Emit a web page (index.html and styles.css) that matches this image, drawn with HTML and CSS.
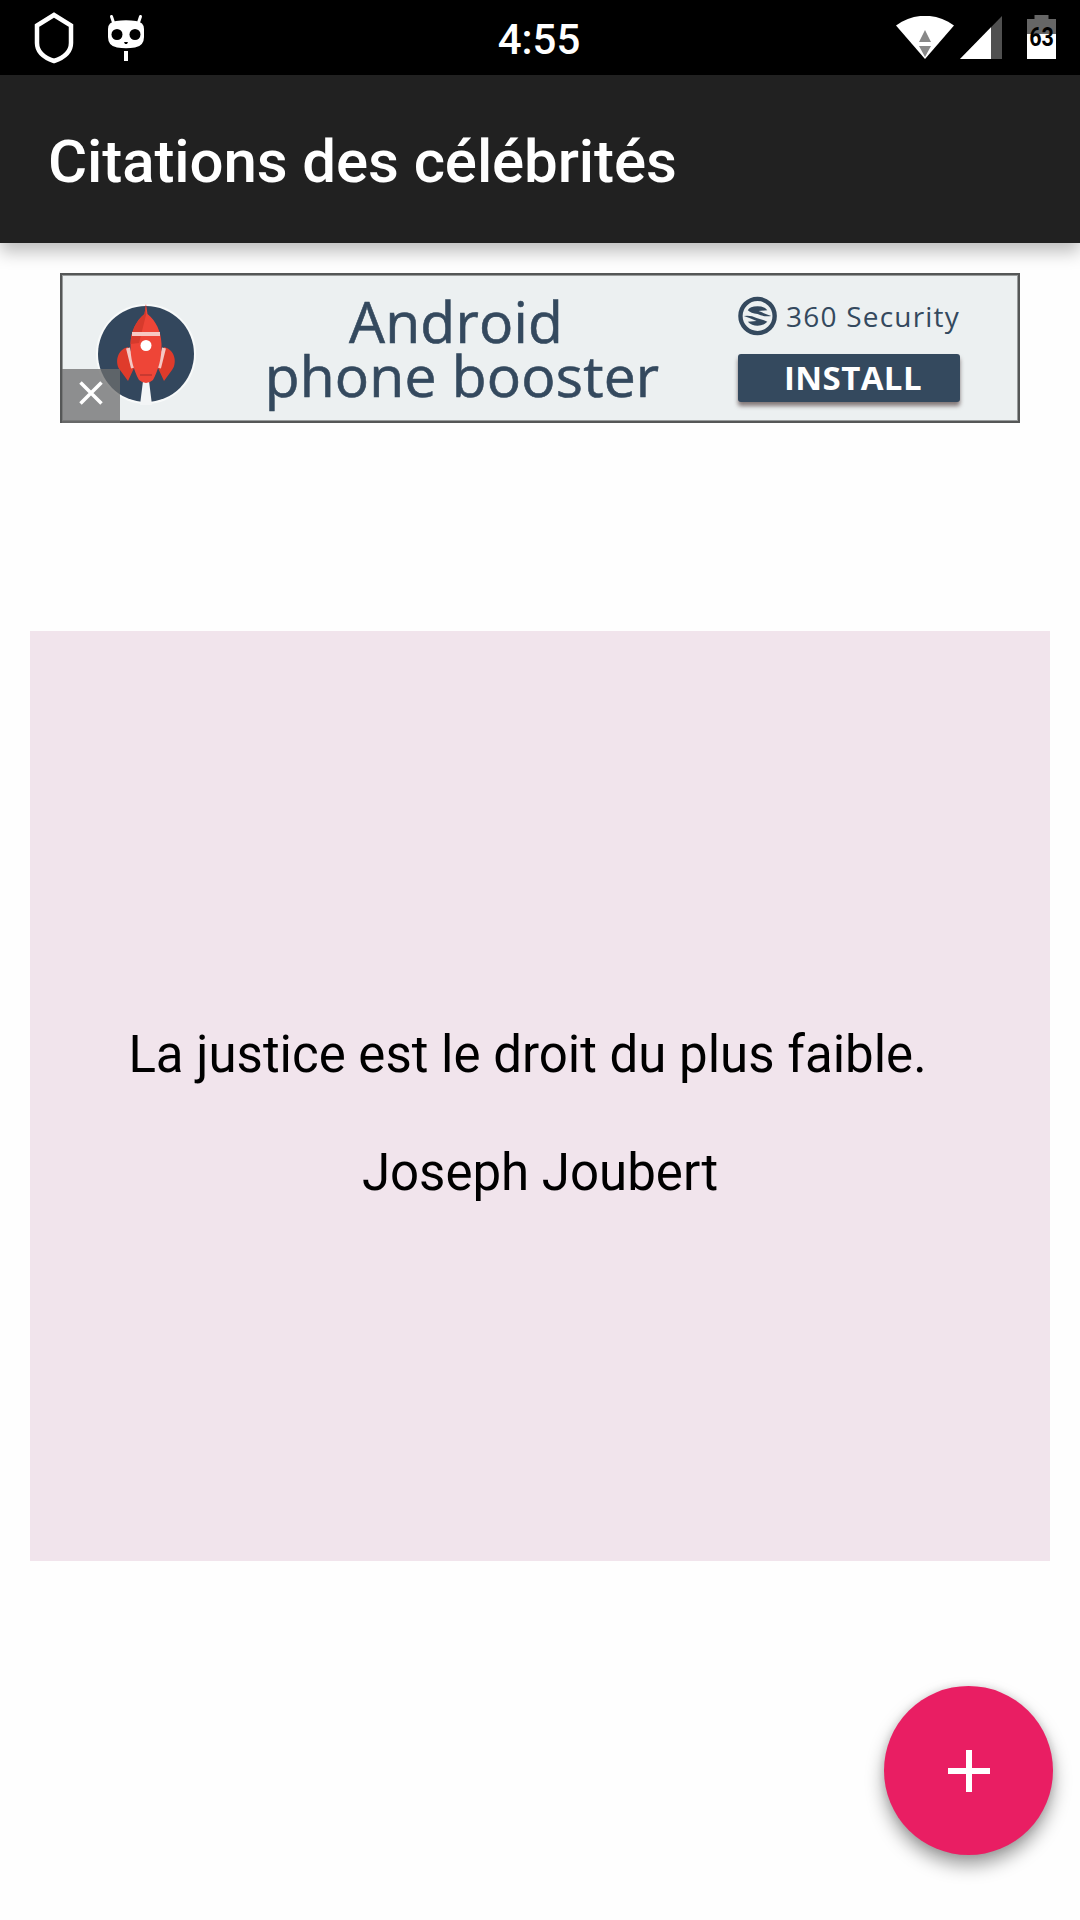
FILE: index.html
```html
<!DOCTYPE html>
<html lang="fr">
<head>
    <meta charset="UTF-8">
    <meta name="viewport" content="width=device-width, initial-scale=1">
    <title>Citations des célébrités</title>
    <link rel="stylesheet" href="styles.css">
</head>
<body>
    <div class="status-bar">
        <div class="status-left">
            <svg width="40" height="52" viewBox="0 0 40 52">
                <path d="M20 3L37 13.500V31C37 41 29 46 20 49C11 46 3 41 3 31V13.500Z" fill="none" stroke="#fff" stroke-width="4.500"/>
            </svg>
            <svg width="38" height="48" viewBox="0 0 38 48">
                <path d="M4.500 2.500L7 10M33.500 2.500L31 10" stroke="#fff" stroke-width="3" stroke-linecap="round"/>
                <path d="M9 7Q19 5.500 29 7Q37 8 37 15V23Q37 32 28 33.500Q19 35 10 33.500Q1 32 1 23V15Q1 8 9 7Z" fill="#fff"/>
                <circle cx="10" cy="20.500" r="5.500" fill="#000"/>
                <circle cx="28" cy="20.500" r="5.500" fill="#000"/>
                <path d="M17 28H21L20 30H18Z" fill="#000"/>
                <rect x="17" y="37" width="4" height="10" fill="#fff"/>
            </svg>
        </div>
        <div class="clock">4:55</div>
        <div class="status-right">
            <svg class="wifi" width="58" height="44" viewBox="0 0 58 44">
                <path d="M0 9.500C18 -3.500 40 -3.500 58 9.500L29 43Z" fill="#fff"/>
                <path d="M29 14L35 26H23ZM23 30H35L29 41Z" fill="#888"/>
            </svg>
            <svg class="signal" width="42" height="43" viewBox="0 0 42 43">
                <path d="M0 43L42 0V43Z" fill="#505050"/>
                <path d="M0 43L31 11.300V43Z" fill="#fff"/>
            </svg>
            <div class="battery">
                <svg width="29" height="44" viewBox="0 0 29 44">
                    <path d="M7.500 0H21.500V4H29V19H0V4H7.500Z" fill="#666"/>
                    <rect y="19" width="29" height="25" fill="#fff"/>
                </svg>
                <span class="battery-level">63</span>
            </div>
        </div>
    </div>

    <div class="header">
        <h1>Citations des célébrités</h1>
    </div>

    <div class="container">
        <div class="pub">
            <svg class="rocket" width="100" height="104" viewBox="0 0 100 104">
                <circle cx="50" cy="53" r="50" fill="#f8fafa"/>
                <circle cx="50" cy="53" r="48" fill="#33475d"/>
                <path d="M47 80H53L56 104H44Z" fill="#f3f5f6"/>
                <path d="M32 46C20 49 19 63 24 69L32 80L38 67ZM68 46C80 49 81 63 76 69L68 80L62 67Z" fill="#df3b2b"/>
                <path d="M32 47L37 67M68 47L63 67" stroke="#f5c8c4" stroke-width="4"/>
                <path d="M50 3L51.500 13C60 20 65 30 65.500 43C66 57 62 70 57 79Q50 85 43 79C38 70 34 57 34.500 43C35 30 40 20 48.500 13Z" fill="#ee4537"/>
                <path d="M50 3L48.500 13C40 20 35 30 34.500 43L43 42L50 14Z" fill="#d63a2c"/>
                <path d="M36 33H64" stroke="#f7c9c3" stroke-width="4"/>
                <circle cx="50" cy="44.500" r="5.500" fill="#fff"/>
                <path d="M44 74H56" stroke="#c83a31" stroke-width="2"/>
            </svg>
            <div class="pub-text">
                <div class="pub-line1">Android</div>
                <div class="pub-line2">phone booster</div>
            </div>
            <div class="pub-action">
                <div class="pub-brand">
                    <svg width="40" height="40" viewBox="0 0 40 40">
                        <circle cx="20" cy="20" r="17.500" fill="none" stroke="#34495e" stroke-width="4.500"/>
                        <path d="M10 14Q12 10 20 10Q27 10 30 14L21 15Q29 18 34 20Q26 21 20 18Q13 17 10 14Z" fill="#34495e"/>
                        <path d="M6 20Q13 19 19 22Q27 24 30 26Q26 30 20 30Q14 30 10 26L19 25Q12 22 6 20Z" fill="#34495e"/>
                    </svg>
                    <span>360 Security</span>
                </div>
                <div class="pub-install">INSTALL</div>
            </div>
            <div class="pub-close">
                <svg width="24" height="24" viewBox="0 0 24 24">
                    <path d="M1.500 1.500L22.500 22.500M22.500 1.500L1.500 22.500" stroke="#fff" stroke-width="3.500"/>
                </svg>
            </div>
        </div>

        <div class="citation">
            <p class="texte">La justice est le droit du plus faible.</p>
            <p class="auteur">Joseph Joubert</p>
        </div>
    </div>

    <button class="fab" type="button" aria-label="Ajouter">
        <svg width="42" height="42" viewBox="0 0 42 42">
            <path d="M21 0V42M0 21H42" stroke="#fff" stroke-width="6"/>
        </svg>
    </button>
</body>
</html>
```
FILE: styles.css
```css
body {
    font-family: Roboto, sans-serif;
    background-color: #fefefe;
    color: #000;
    margin: 0;
    height: 1920px;
    overflow: hidden;
}
svg {
    display: block;
}
/* Barre d'état */
.status-bar {
    display: grid;
    grid-template-columns: 1fr auto 1fr;
    height: 75px;
    background-color: #000;
    color: #fff;
}
.status-left {
    display: flex;
    align-items: flex-start;
    gap: 33px;
    padding: 12px 0 0 34px;
}
.status-left svg + svg {
    margin-top: 2px;
}
.clock {
    margin-right: 2px;
    font-size: 42px;
    font-weight: 500;
    line-height: 80px;
}
.status-right {
    display: flex;
    justify-content: flex-end;
    align-items: flex-start;
    padding: 15px 24px 0 0;
}
.wifi {
    margin: 1px 6px 0 0;
}
.signal {
    margin: 1px 25px 0 0;
}
.battery {
    position: relative;
}
.battery-level {
    position: absolute;
    top: 9px;
    left: -3px;
    width: 35px;
    text-align: center;
    color: #000;
    font-size: 25px;
    font-weight: 700;
    line-height: 28px;
    transform: scaleX(0.86);
}
.header {
    display: flex;
    align-items: center;
    height: 168px;
    padding-left: 48px;
    background-color: #212121;
    color: #fff;
    box-shadow: 0 9px 16px rgba(0, 0, 0, 0.25);
}
.header h1 {
    margin: 5px 0 0;
    font-size: 60px;
    font-weight: 500;
    letter-spacing: -0.1px;
}
.container {
    padding: 30px;
}
/* Bannière publicitaire */
.pub {
    position: relative;
    display: flex;
    box-sizing: border-box;
    height: 150px;
    margin: 0 30px;
    border: 2px solid #555757;
    box-shadow: inset 0 0 0 1px #999c9c;
    background-color: #ecf0f1;
    color: #34495e;
    font-family: "Open Sans", sans-serif;
}
.rocket {
    margin: 26px 0 0 34px;
}
.pub-text {
    width: 400px;
    margin: 19px 0 0 66px;
    text-align: center;
    font-size: 57px;
    line-height: 54px;
    letter-spacing: 0.2px;
    white-space: nowrap;
    -webkit-text-stroke: 0.6px #34495e;
}
.pub-line1 {
    margin-right: 12px;
}
.pub-action {
    width: 222px;
    margin: 21px 0 0 76px;
}
.pub-brand {
    display: flex;
    align-items: center;
    gap: 9px;
    height: 40px;
    font-size: 28px;
    font-weight: 500;
    letter-spacing: 1.2px;
    white-space: nowrap;
}
.pub-install {
    height: 48px;
    margin-top: 18px;
    border-radius: 3px;
    background-color: #34495e;
    box-shadow: 0 4px 4px rgba(60, 40, 40, 0.6);
    color: #fff;
    text-align: center;
    font-size: 33px;
    font-weight: 700;
    line-height: 48px;
    letter-spacing: 0.4px;
    text-indent: 8px;
}
.pub-close {
    position: absolute;
    left: 0;
    bottom: -2px;
    display: flex;
    align-items: center;
    justify-content: center;
    box-sizing: border-box;
    width: 58px;
    height: 54px;
    padding-bottom: 6px;
    background-color: rgba(110, 110, 110, 0.75);
}
.citation {
    display: flex;
    flex-direction: column;
    align-items: center;
    justify-content: center;
    height: 930px;
    margin-top: 208px;
    background-color: #f1e4ec;
    font-size: 51px;
    line-height: 60px;
}
.citation p {
    margin: 0;
}
.citation .texte {
    margin: 36px 25px 58px 0;
}
.fab {
    position: fixed;
    right: 27px;
    bottom: 65px;
    display: flex;
    align-items: center;
    justify-content: center;
    width: 169px;
    height: 169px;
    padding: 0;
    border: none;
    border-radius: 50%;
    background-color: #e91e63;
    box-shadow: 0 10px 18px rgba(0, 0, 0, 0.38), 0 0 10px rgba(0, 0, 0, 0.12);
    cursor: pointer;
}
```
